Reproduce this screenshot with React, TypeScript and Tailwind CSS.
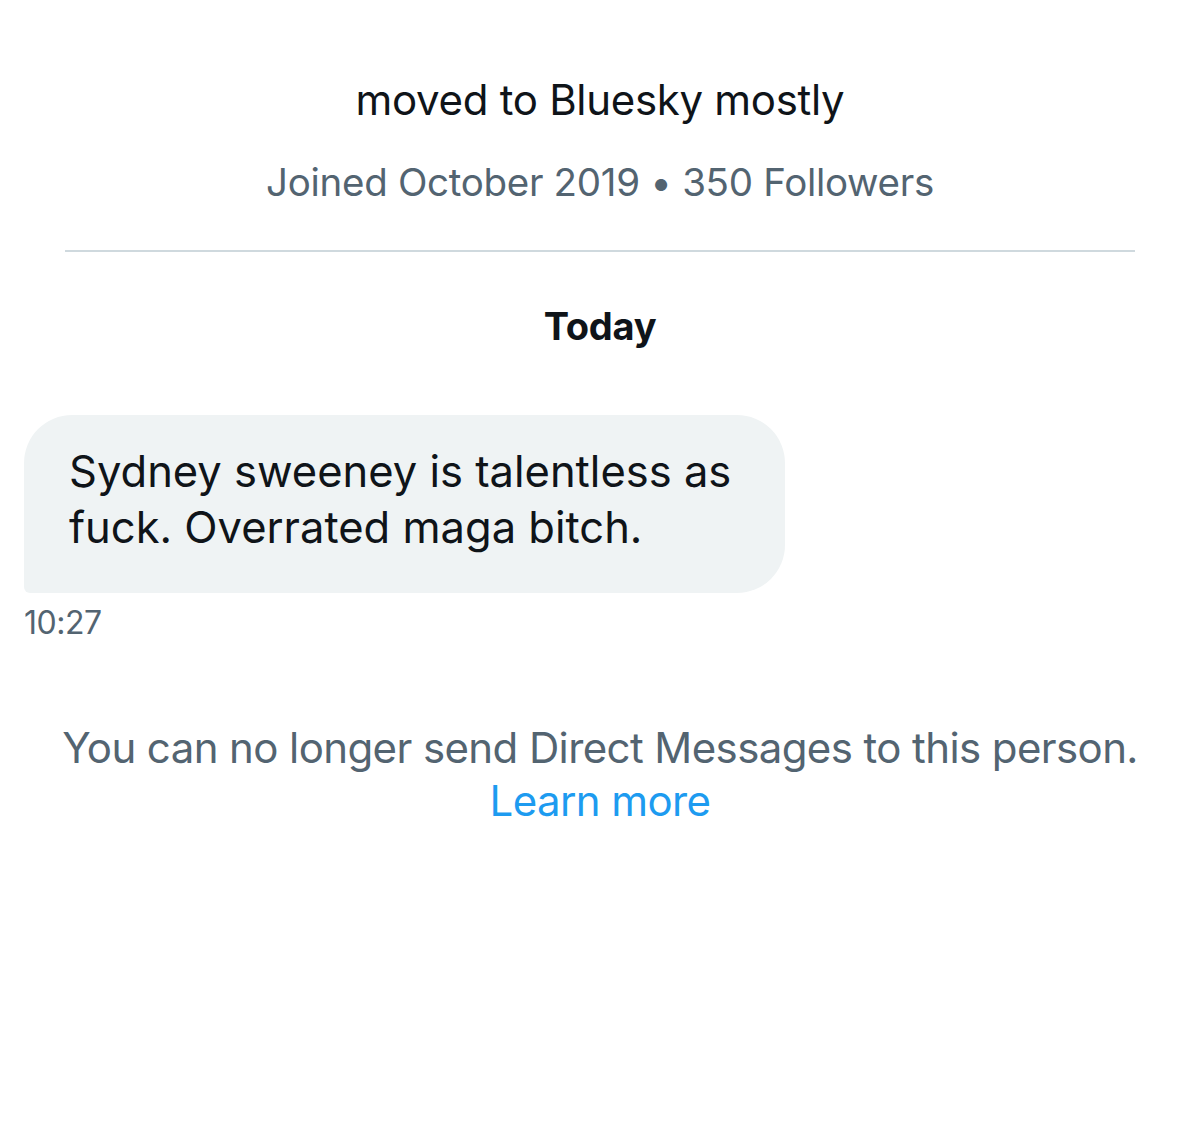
export default function App() {
  return (
    <div className="min-h-[1135px] w-[1200px] bg-white font-['Inter','Noto_Sans',sans-serif] text-[#0f1419]">
      <div className="flex flex-col items-center pt-[72px]">
        <p className="text-[42px] leading-[56px] tracking-[-0.3px]">moved to Bluesky mostly</p>
        <p className="mt-[30px] text-[38.5px] leading-[48px] tracking-[-0.3px] text-[#536471]">
          Joined October 2019 • 350 Followers
        </p>
      </div>

      <div className="mx-[65px] mt-[44px] h-[2px] bg-[#cfd9de]" />

      <div className="mt-[50px] text-center text-[38px] font-bold leading-[48px] tracking-[-0.3px]">Today</div>

      <div className="mt-[65px] px-[24px]">
        <div className="w-[761px] rounded-[48px] rounded-bl-[6px] bg-[#eff3f4] px-[45px] pb-[38px] pt-[28px] text-[43.5px] leading-[56px]">
          Sydney sweeney is talentless as
          <br />
          fuck. Overrated maga bitch.
        </div>
        <p className="mt-[10px] text-[32px] leading-[40px] tracking-[-0.5px] text-[#536471]">10:27</p>
      </div>

      <div className="mt-[78px] text-center text-[42px] leading-[53px] tracking-[-0.6px] text-[#536471]">
        You can no longer send Direct Messages to this person.
        <br />
        <a className="text-[#1d9bf0]">Learn more</a>
      </div>
    </div>
  )
}
